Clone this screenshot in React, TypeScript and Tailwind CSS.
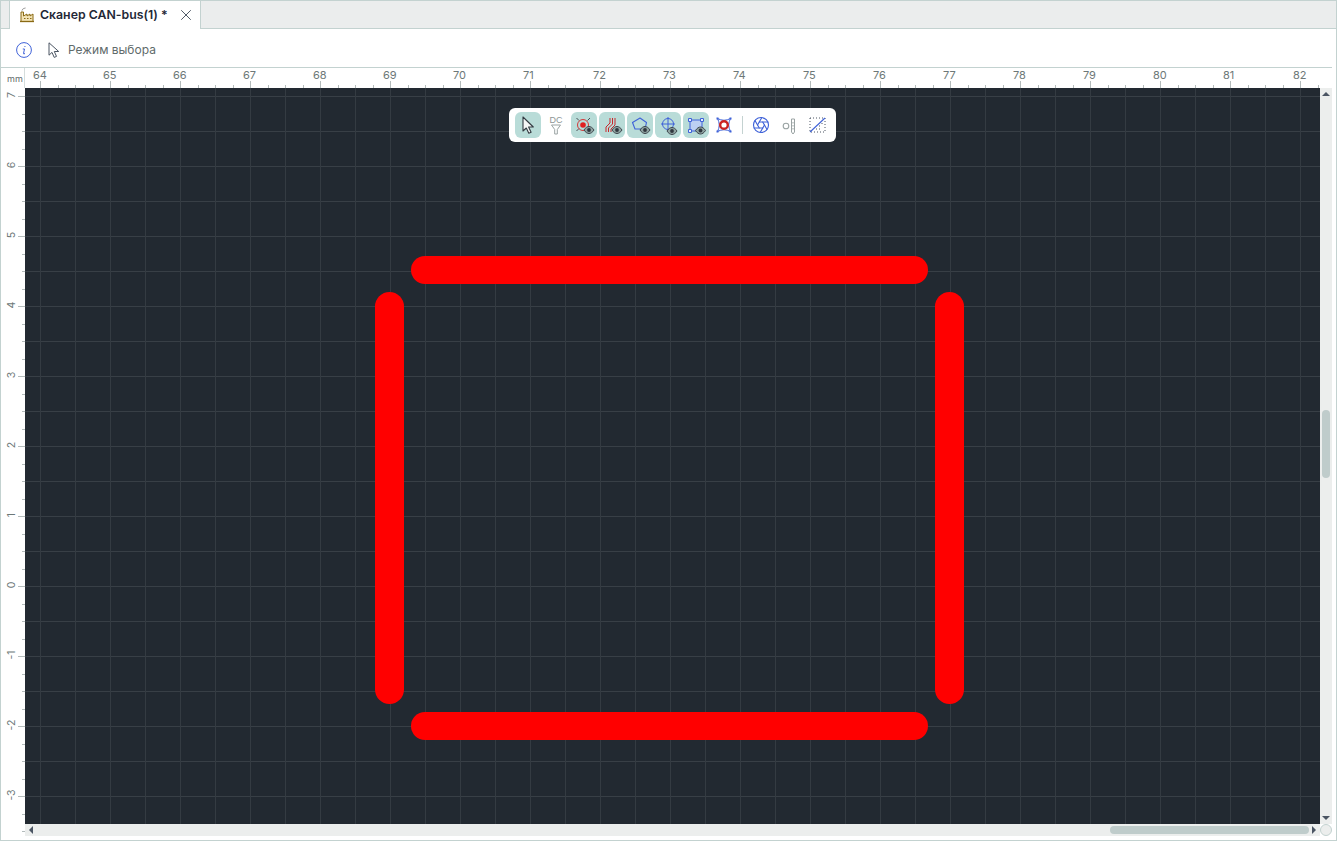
import { Aperture, X } from 'lucide-react'

const hMajor = Array.from({ length: 19 }, (_, i) => 64 + i)
const vMajor = [7, 6, 5, 4, 3, 2, 1, 0, -1, -2, -3]

// eye badge that sits on the corner of the layer icons
function Eye({ x = 11, y = 12.5 }: { x?: number; y?: number }) {
  return (
    <g transform={`translate(${x} ${y})`}>
      <path d="M0 3.500C1.500 1 3.500 0 5 0s3.500 1 5 3.500C8.500 6 6.500 7 5 7S1.500 6 0 3.500z" fill="#8fa3a1" stroke="#3d454c" strokeWidth="1" />
      <circle cx="5" cy="3.500" r="1.900" fill="#2f363d" />
    </g>
  )
}

function ToolBtn({ active, children }: { active?: boolean; children: React.ReactNode }) {
  return (
    <div className={`w-[26px] h-[26px] rounded-[6px] flex items-center justify-center ${active ? 'bg-[#b9dcd8]' : ''}`}>
      <svg width="22" height="22" viewBox="0 0 22 22" fill="none">
        {children}
      </svg>
    </div>
  )
}

function Toolbar() {
  return (
    <div className="absolute left-[484px] top-[20px] w-[327px] h-[34px] bg-white rounded-[6px] flex items-center pl-[6px] gap-[2px]">
      <ToolBtn active>
        <path d="M6 3v14l3.300-3 2.500 5.300 2.300-1-2.500-5.300h4.700z" fill="#f5f7f7" stroke="#343b42" strokeWidth="1.100" strokeLinejoin="round" />
      </ToolBtn>
      <div className="w-[26px] h-[26px] flex flex-col items-center justify-center">
        <span className="text-[9px] leading-[8px] text-[#8d9696] font-['Liberation_Sans',sans-serif]">DC</span>
        <svg width="12" height="11" viewBox="0 0 12 11" fill="none">
          <path d="M1.500 1h9L7.300 5.500V10H4.700V5.500z" stroke="#9aa3a3" strokeWidth="1" />
        </svg>
      </div>
      <ToolBtn active>
        <path d="M3.500 4l2.500 2.500M17 4l-2.500 2.500M3.500 17L6 14.500" stroke="#3a3f46" strokeWidth="0.900" />
        <circle cx="10" cy="11" r="5.500" stroke="#d23b3b" strokeWidth="1" />
        <circle cx="10" cy="11" r="2.800" fill="#e02020" />
        <Eye />
      </ToolBtn>
      <ToolBtn active>
        <path d="M5 18v-5l4-4V4M7.500 18v-4l4-4V4M10 18v-3l4-4V4" stroke="#c8282c" strokeWidth="1" />
        <Eye />
      </ToolBtn>
      <ToolBtn active>
        <path d="M11 4l6.500 4.500L16 15H6L3.500 8.500z" stroke="#3f62d8" strokeWidth="1.100" strokeLinejoin="round" />
        <Eye />
      </ToolBtn>
      <ToolBtn active>
        <circle cx="11" cy="10" r="5.500" stroke="#3f62d8" strokeWidth="1" />
        <path d="M11 3v14M4 10h14" stroke="#3f62d8" strokeWidth="1" />
        <Eye x={10} y={13.500} />
      </ToolBtn>
      <ToolBtn active>
        <path d="M5 6h12v11H5z" fill="#bcd0f3" stroke="#3f62d8" strokeWidth="1" />
        <path d="M3.500 4.500h3v3h-3zM15.500 4.500h3v3h-3zM3.500 15.500h3v3h-3z" fill="#e8f0fb" stroke="#3f62d8" strokeWidth="1" />
        <Eye x={10.500} y={13} />
      </ToolBtn>
      <ToolBtn>
        <path d="M4.500 4.500Q11 8 17.500 4.500Q14 11 17.500 17.500Q11 14 4.500 17.500Q8 11 4.500 4.500z" stroke="#3f62d8" strokeWidth="1" />
        <path d="M3.500 3.500h2v2h-2zM16.500 3.500h2v2h-2zM3.500 16.500h2v2h-2zM16.500 16.500h2v2h-2z" fill="#3f62d8" />
        <circle cx="11" cy="11" r="3.800" fill="#fff" stroke="#cc2222" strokeWidth="2.400" />
      </ToolBtn>
      <div className="w-px h-[18px] bg-[#c4d2d1] mx-[3px]" />
      <ToolBtn>
        <foreignObject width="22" height="22">
          <div className="w-[22px] h-[22px] flex items-center justify-center">
            <Aperture className="w-[18px] h-[18px] text-[#3f62d8]" strokeWidth={1.500} />
          </div>
        </foreignObject>
      </ToolBtn>
      <ToolBtn>
        <circle cx="8" cy="12" r="2.800" stroke="#9aa3a3" strokeWidth="1.100" />
        <path d="M13.500 5h3v13l-1.500 2-1.500-2z" stroke="#9aa3a3" strokeWidth="1" />
        <path d="M15 8v8" stroke="#9aa3a3" strokeWidth="1" strokeDasharray="1.500 1.500" />
      </ToolBtn>
      <ToolBtn>
        <path d="M4 4h15v14H4z" stroke="#4b5563" strokeWidth="1" strokeDasharray="1 2" />
        <path d="M4 18L19 4" stroke="#3f62d8" strokeWidth="1.100" />
        <path d="M10 15h6M13 12h3M16 9v3" stroke="#4b5563" strokeWidth="1" strokeDasharray="1 2" />
      </ToolBtn>
    </div>
  )
}

export default function App() {
  return (
    <div className="w-[1337px] h-[841px] bg-white border border-[#c3d2d0] overflow-hidden flex flex-col font-['Inter',sans-serif]">
      {/* tab strip */}
      <div className="h-[28px] shrink-0 bg-[#ebeded] border-b border-[#c3d2d0] pl-[8px] flex">
        <div className="w-[192px] h-[28px] bg-white border-r border-[#c3d2d0] border-l flex items-center pl-[9px]">
          <svg width="16" height="16" viewBox="0 0 16 16" fill="none" className="shrink-0">
            <path d="M2 14.500V5h2.500v4L8 7v2l3-2v2l3-2v7.500z" fill="#f2e3b5" stroke="#8a6a14" strokeWidth="1" />
            <path d="M1 14.500h14" stroke="#8a6a14" strokeWidth="1.300" />
            <path d="M3 3.500C3.500 1.500 5 1.500 6.500 1" stroke="#8a8a8a" strokeWidth="1" />
            <path d="M5 11.500h1.500M8 11.500h1.500M11 11.500h1.500" stroke="#8a6a14" strokeWidth="1" />
          </svg>
          <span className="ml-[5px] text-[12.300px] font-semibold text-[#1f2937] whitespace-nowrap">Сканер CAN-bus(1) *</span>
          <X className="ml-[9px] w-[18px] h-[18px] text-[#4b5563]" strokeWidth={1.300} />
        </div>
      </div>

      {/* mode row */}
      <div className="h-[38px] shrink-0 flex items-center pl-[15px] pt-[3px]">
        <svg width="16" height="16" viewBox="0 0 16 16" fill="none" className="shrink-0">
          <circle cx="8" cy="8" r="7.400" stroke="#3f62d8" strokeWidth="1" />
          <path d="M8.900 4.200v.800" stroke="#3f62d8" strokeWidth="1.300" />
          <path d="M6.800 7h1.700L7.500 11.500c-.1.500.3.600 1.500 0" stroke="#3f62d8" strokeWidth="1" />
        </svg>
        <svg width="12" height="16" viewBox="0 0 12 16" fill="none" className="ml-[16px] shrink-0">
          <path d="M1 .800v12.400l3-2.800 2.200 5 2.300-1-2.200-4.900h4.400z" fill="#fff" stroke="#4b5563" strokeWidth="1" strokeLinejoin="round" />
        </svg>
        <span className="ml-[8px] text-[12px] text-[#5f6b6b]">Режим выбора</span>
      </div>

      {/* horizontal ruler */}
      <div className="h-[21px] shrink-0 flex border-t border-[#c3d2d0] mr-[4px]">
        <div className="w-[24px] shrink-0 border-r border-[#d5dddc] text-[9px] leading-[10px] pt-[6px] pl-[6px] text-[#5f6b6b]">mm</div>
        <div className="flex-1 relative overflow-hidden">
          <div className="flex h-full pl-[15px]">
            {hMajor.map((n) => (
              <div key={n} className="w-[70px] shrink-0 relative h-full">
                <span className="absolute left-[-7px] top-0 text-[11px] leading-[14px] text-[#6d7878]">{n}</span>
                <div className="absolute left-0 bottom-0 w-px h-[7px] bg-[#b4bcbc]" />
                <div className="absolute left-[17.500px] bottom-0 w-px h-[3px] bg-[#b4bcbc]" />
                <div className="absolute left-[35px] bottom-0 w-px h-[3px] bg-[#b4bcbc]" />
                <div className="absolute left-[52.500px] bottom-0 w-px h-[3px] bg-[#b4bcbc]" />
              </div>
            ))}
          </div>
        </div>
      </div>

      <div className="flex-1 flex min-h-0">
        {/* vertical ruler */}
        <div className="w-[24px] shrink-0 relative overflow-hidden pt-[8px]">
          {vMajor.map((n) => (
            <div key={n} className="h-[70px] relative">
              <span className="absolute left-[5px] w-[12px] top-[-1px] -translate-y-1/2 -rotate-90 text-center text-[10.500px] leading-[12px] text-[#6d7878] whitespace-nowrap">{n}</span>
              <div className="absolute right-0 top-0 h-px w-[7px] bg-[#b4bcbc]" />
              <div className="absolute right-0 top-[17.500px] h-px w-[3px] bg-[#b4bcbc]" />
              <div className="absolute right-0 top-[35px] h-px w-[3px] bg-[#b4bcbc]" />
              <div className="absolute right-0 top-[52.500px] h-px w-[3px] bg-[#b4bcbc]" />
            </div>
          ))}
        </div>

        {/* canvas and scroll bars */}
        <div className="flex-1 flex flex-col min-w-0 mr-[4px] mb-[4px]">
          <div className="flex-1 flex min-h-0">
            <div className="flex-1 relative overflow-hidden bg-[#222931] bg-[linear-gradient(to_right,#343b42_1px,transparent_1px),linear-gradient(to_bottom,#383f46_1px,transparent_1px)] bg-[size:35px_35px] bg-[position:15px_8px]">
              <div className="absolute left-[386px] top-[168px] w-[517px] h-[28px] rounded-full bg-[#ff0000]" />
              <div className="absolute left-[386px] top-[624px] w-[517px] h-[28px] rounded-full bg-[#ff0000]" />
              <div className="absolute left-[350px] top-[204px] w-[29px] h-[412px] rounded-full bg-[#ff0000]" />
              <div className="absolute left-[910px] top-[204px] w-[29px] h-[412px] rounded-full bg-[#ff0000]" />
              <Toolbar />
            </div>
            <div className="w-[12px] shrink-0 bg-[#eceeed] flex flex-col items-center pt-[4px] pb-[4px]">
              <div className="w-0 h-0 border-x-[4px] border-x-transparent border-b-[4px] border-b-[#4b5563]" />
              <div className="flex-1 w-full relative">
                <div className="absolute left-[2px] top-[314px] w-[8px] h-[68px] rounded-[4px] bg-[#bfcccb]" />
              </div>
              <div className="w-0 h-0 border-x-[4px] border-x-transparent border-t-[4px] border-t-[#4b5563]" />
            </div>
          </div>
          <div className="h-[12px] shrink-0 flex">
            <div className="flex-1 bg-[#eceeed] flex items-center pl-[4px] pr-[4px]">
              <div className="w-0 h-0 border-y-[4px] border-y-transparent border-r-[4px] border-r-[#4b5563]" />
              <div className="flex-1 h-full relative">
                <div className="absolute right-[3px] top-[2px] h-[8px] w-[199px] rounded-[4px] bg-[#bfcccb]" />
              </div>
              <div className="w-0 h-0 border-y-[4px] border-y-transparent border-l-[4px] border-l-[#4b5563]" />
            </div>
            <div className="w-[12px] h-[12px] rounded-full bg-[#eceeed] border border-[#c3d2d0]" />
          </div>
        </div>
      </div>
    </div>
  )
}
